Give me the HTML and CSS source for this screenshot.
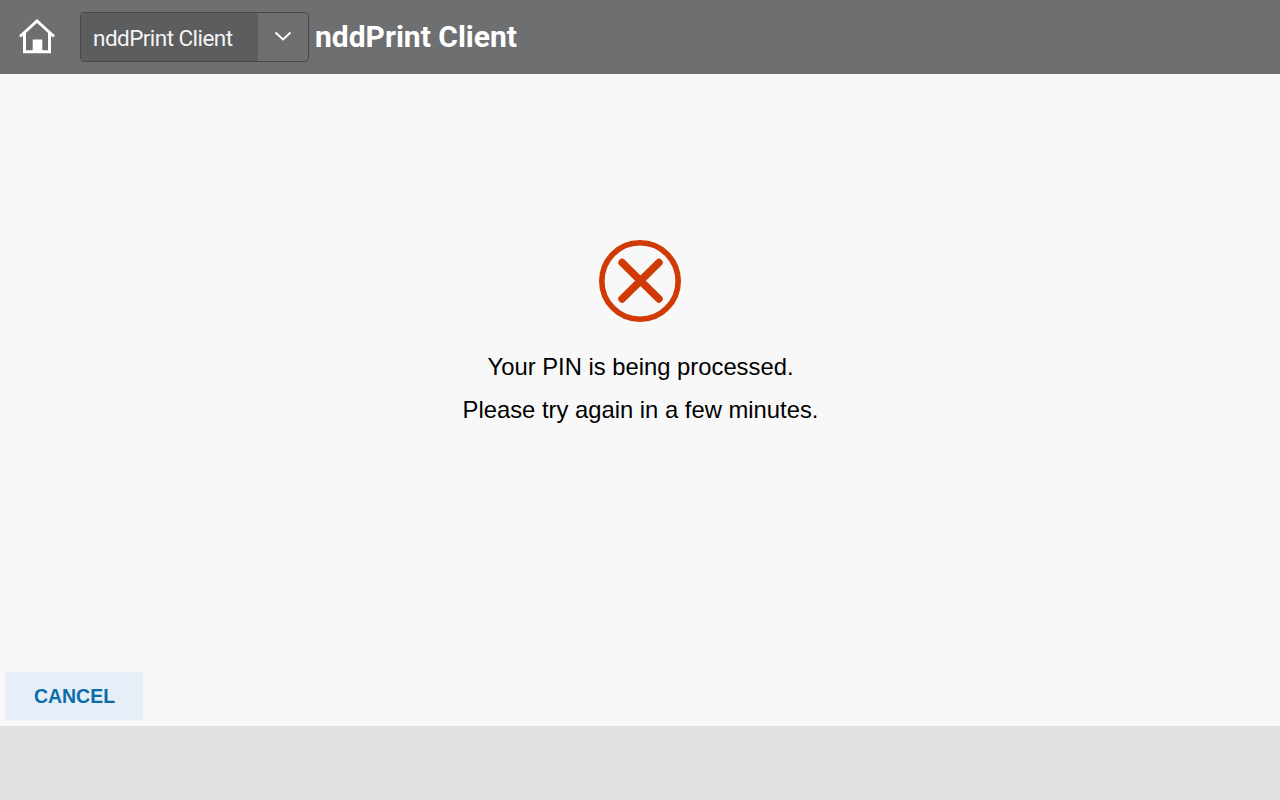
FILE: index.html

```html
<!DOCTYPE html>
<html lang="en">
<head>
  <meta charset="UTF-8">
  <title>nddPrint Client</title>
  <link rel="stylesheet" href="styles.css">
</head>
<body>
  <header class="topbar">
    <button class="home-btn" aria-label="Home">
      <svg width="38" height="38" viewBox="0 0 38 38">
        <path d="M2 18.5 L19 3 L36 18.5" class="home-line"/>
        <path d="M6.5 15 V33.8 H31.5 V15" class="home-line"/>
        <rect x="14.7" y="21.5" width="9.6" height="12" fill="#fff"/>
      </svg>
    </button>
    <div class="app-select">
      <span class="app-select-text">nddPrint Client</span>
      <span class="app-select-arrow">
        <svg width="18" height="12" viewBox="0 0 18 12">
          <path d="M1.5 2.5 L9 9.5 L16.5 2.5" fill="none" stroke="#fff" stroke-width="1.9"/>
        </svg>
      </span>
    </div>
    <h1 class="app-title">nddPrint Client</h1>
  </header>

  <main class="content">
    <div class="message">
      <svg class="error-icon" width="82" height="82" viewBox="0 0 82 82">
        <circle cx="41" cy="41" r="38.2" fill="none" stroke="#d03a06" stroke-width="5.6"/>
        <path d="M23 22.5 L60 59 M60 22.5 L23 59" fill="none" stroke="#d03a06" stroke-width="7.4" stroke-linecap="round"/>
      </svg>
      <p>Your PIN is being processed.</p>
      <p>Please try again in a few minutes.</p>
    </div>
    <div class="actions">
      <button class="cancel-btn">CANCEL</button>
    </div>
  </main>

  <footer class="bottom"></footer>
</body>
</html>
```

FILE: styles.css

```css
* {
  box-sizing: border-box;
}
body {
  margin: 0;
  height: 800px;
  display: flex;
  flex-direction: column;
  background-color: #f8f8f8;
  font-family: "Liberation Sans", Arial, sans-serif;
  overflow: hidden;
}
.topbar {
  height: 74px;
  background-color: #6e6f71;
  display: flex;
  align-items: center;
  padding-left: 18px;
  color: #fff;
}
.home-btn {
  width: 38px;
  height: 38px;
  padding: 0;
  border: 0;
  background: none;
  margin-right: 24px;
}
.home-btn svg {
  display: block;
}
.home-line {
  fill: none;
  stroke: #fff;
  stroke-width: 3;
}
.app-select {
  width: 229px;
  height: 50px;
  margin-top: -1px;
  display: flex;
  border: 1px solid #47484a;
  border-radius: 4px;
  overflow: hidden;
}
.app-select-text {
  flex: 1;
  background-color: #5c5d5f;
  padding-left: 12px;
  line-height: 51px;
  font-family: Roboto, sans-serif;
  font-size: 22.5px;
  letter-spacing: -0.55px;
  color: #f4f4f4;
}
.app-select-arrow {
  width: 50px;
  display: flex;
  align-items: center;
  justify-content: center;
  padding-bottom: 2px;
}
.app-title {
  margin: 0 0 2px 6px;
  font-family: Roboto, sans-serif;
  font-size: 30px;
  font-weight: 700;
}
.content {
  height: 652px;
  display: flex;
  flex-direction: column;
  padding: 166px 5px 6px;
}
.message {
  flex: 1;
  text-align: center;
  font-size: 23.8px;
  color: #000;
}
.error-icon {
  display: block;
  margin: 0 auto 23px;
}
.message p {
  margin: 0;
  padding-left: 1px;
  height: 43px;
  line-height: 43px;
}
.cancel-btn {
  display: block;
  width: 138px;
  height: 48px;
  padding: 0 0 0 1px;
  border: 0;
  background-color: #e6eff7;
  color: #0b6ea8;
  font-family: "Liberation Sans", Arial, sans-serif;
  font-size: 19.5px;
  font-weight: 700;
}
.bottom {
  height: 74px;
  background-color: #e1e1e1;
}
```
